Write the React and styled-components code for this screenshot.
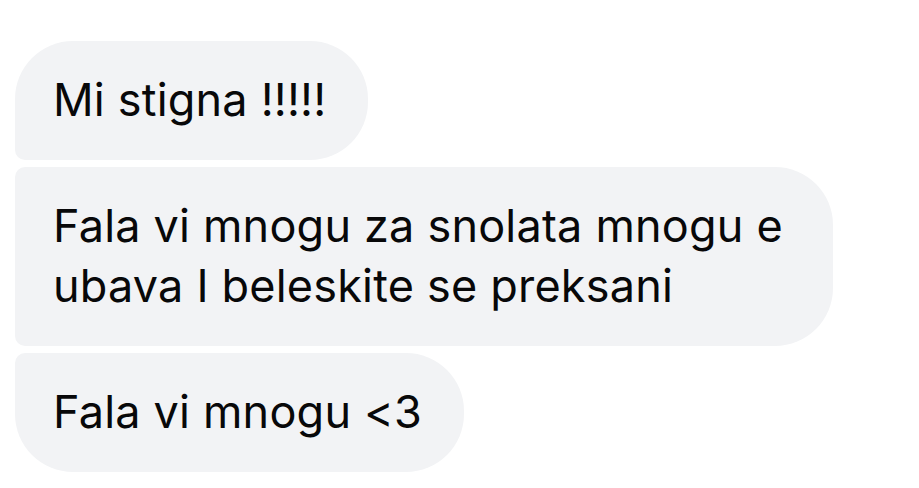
import React from 'react';
import styled, { createGlobalStyle, css } from 'styled-components';

const GlobalStyle = createGlobalStyle`
    html, body {
        margin: 0;
        padding: 0;
        background: #ffffff;
    }
    body {
        font-family: Inter, "Noto Sans", sans-serif;
        -webkit-font-smoothing: antialiased;
    }
`;

const Thread = styled.div`
    display: flex;
    flex-direction: column;
    align-items: flex-start;
    gap: 7px;
    padding: 41px 0 0 15px;
    width: 919px;
    height: 488px;
    box-sizing: border-box;
`;

const BIG = '58px';
const SMALL = '10px';

const Bubble = styled.div`
    box-sizing: border-box;
    max-width: 818px;
    padding: 29px 42px 30px 38px;
    background: #f2f3f5;
    color: #080809;
    font-size: 45px;
    line-height: 60px;
    letter-spacing: 0.2px;
    border-radius: ${BIG};

    ${({ $pos }) => $pos === 'first' && css`
        border-bottom-left-radius: ${SMALL};
    `}
    ${({ $pos }) => $pos === 'middle' && css`
        border-top-left-radius: ${SMALL};
        border-bottom-left-radius: ${SMALL};
    `}
    ${({ $pos }) => $pos === 'last' && css`
        border-top-left-radius: ${SMALL};
    `}
`;

const messages = [
    { id: 1, pos: 'first', text: 'Mi stigna !!!!!' },
    { id: 2, pos: 'middle', text: 'Fala vi mnogu za snolata mnogu e ubava I beleskite se preksani' },
    { id: 3, pos: 'last', text: 'Fala vi mnogu <3' },
];

export default function App() {
    return (
        <>
            <GlobalStyle />
            <Thread>
                {messages.map(m => (
                    <Bubble key={m.id} $pos={m.pos}>{m.text}</Bubble>
                ))}
            </Thread>
        </>
    );
}
